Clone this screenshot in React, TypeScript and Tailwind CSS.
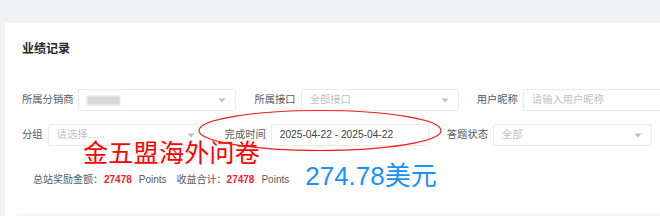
import React from "react";

const Caret = () => (
  <svg width="8" height="5" viewBox="0 0 8 5" className="shrink-0">
    <path d="M0.5 0.5 L7.5 0.5 L4 4.5 Z" fill="#bfbfbf" />
  </svg>
);

const Box = ({
  w,
  children,
  caret,
}: {
  w: string;
  children?: React.ReactNode;
  caret?: boolean;
}) => (
  <div
    className={`${w} h-[22px] border border-[#ebebeb] rounded-[2px] pl-[8px] pr-[9px] flex items-center justify-between shrink-0 bg-white`}
  >
    <div className="flex items-center min-w-0">{children}</div>
    {caret && <Caret />}
  </div>
);

const Label = ({ children }: { children: React.ReactNode }) => (
  <span className="text-[10.3px] leading-[14px] text-[#595959] whitespace-nowrap mr-[5px]">
    {children}
  </span>
);

const Ph = ({ children }: { children: React.ReactNode }) => (
  <span className="text-[10.3px] leading-[14px] text-[#bfbfbf] whitespace-nowrap">{children}</span>
);

export default function App() {
  return (
    <div className="w-[660px] h-[216px] bg-[#f0f2f5] overflow-hidden relative font-['Liberation_Sans','Noto_Sans_CJK_SC',sans-serif]">
      <div className="ml-[5px] mt-[23px] bg-white h-[193px] flex flex-col">
        <div className="pt-[18px] pl-[17px] text-[12px] font-bold leading-[16px] text-[#262626]">
          业绩记录
        </div>

        <div className="mt-[32px] pl-[17px] flex items-center gap-[18px]">
          <div className="flex items-center">
            <Label>所属分销商</Label>
            <Box w="w-[158px]" caret>
              <div className="w-[33px] h-[9px] bg-[#d6d6d6] blur-[1px]" />
            </Box>
          </div>
          <div className="flex items-center">
            <Label>所属接口</Label>
            <Box w="w-[158px]" caret>
              <Ph>全部接口</Ph>
            </Box>
          </div>
          <div className="flex items-center">
            <Label>用户昵称</Label>
            <Box w="w-[158px]">
              <Ph>请输入用户昵称</Ph>
            </Box>
          </div>
        </div>

        <div className="mt-[13px] pl-[17px] flex items-center">
          <div className="flex items-center">
            <Label>分组</Label>
            <Box w="w-[157px]" caret>
              <Ph>请选择......</Ph>
            </Box>
          </div>
          <div className="flex items-center ml-[20px]">
            <Label>完成时间</Label>
            <Box w="w-[158px]">
              <span className="text-[10.2px] leading-[14px] text-[#404040] whitespace-nowrap">
                2025-04-22 - 2025-04-22
              </span>
            </Box>
          </div>
          <div className="flex items-center ml-[18px]">
            <Label>答题状态</Label>
            <Box w="w-[159px]" caret>
              <Ph>全部</Ph>
            </Box>
          </div>
        </div>

        <div className="mt-[19px] pl-[28px] h-[30px] flex items-center text-[10px] leading-[14px] text-[#595959] whitespace-nowrap">
          <span>总站奖励金额：</span>
          <span className="ml-[1px] font-bold text-[#f5222d]">27478</span>
          <span className="ml-[7px]">Points</span>
          <span className="ml-[10px]">收益合计：</span>
          <span className="font-bold text-[#f5222d]">27478</span>
          <span className="ml-[7px]">Points</span>
          <span className="ml-[16px] mb-[8px] text-[26px] leading-[30px] text-[#1890ff]">
            274.78美元
          </span>
        </div>

        <div className="mt-[18px] ml-[12px] h-[10px] bg-[#f7f7f7]" />
      </div>

      <div className="absolute left-[83px] top-[138px] text-[25px] leading-[26px] text-[#ff0000] font-['Noto_Sans_CJK_SC',sans-serif] whitespace-nowrap tracking-[0.3px]">
        金五盟海外问卷
      </div>

      <svg
        className="absolute left-[198px] top-[109px]"
        width="245"
        height="43"
        viewBox="0 0 245 43"
      >
        <ellipse cx="122" cy="21.5" rx="121" ry="20" fill="none" stroke="#ff1a1a" strokeWidth="1.2" />
      </svg>
    </div>
  );
}
